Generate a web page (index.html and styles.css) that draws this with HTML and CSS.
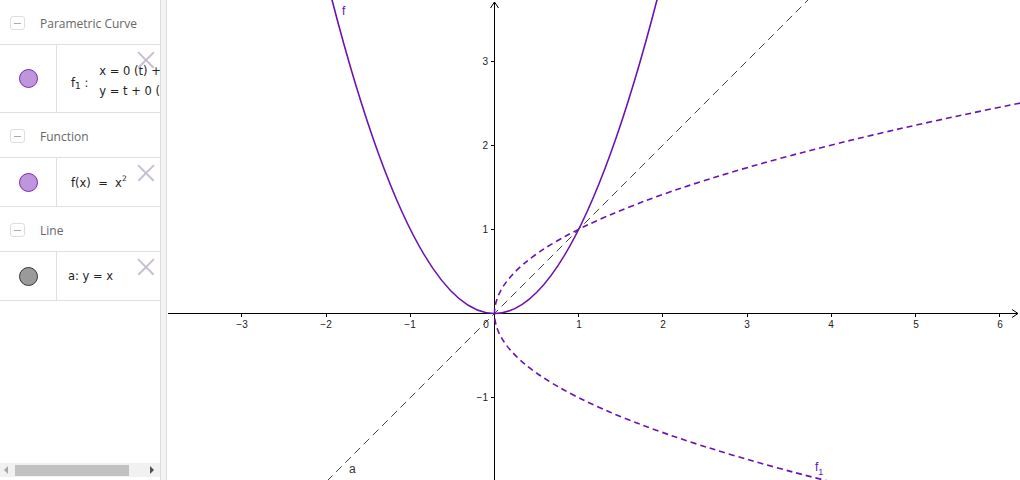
FILE: index.html
```html
<!DOCTYPE html>
<html>
<head>
<meta charset="utf-8">
<link rel="stylesheet" href="styles.css">
</head>
<body>
<div class="app">
  <aside class="algebra">
    <div class="group">
      <div class="header"><span class="toggle"></span><span class="htitle">Parametric Curve</span></div>
      <div class="item item-tall">
        <div class="marble-cell"><span class="marble purple"></span></div>
        <div class="expr">
          <span class="fname">f<sub>1</sub> :</span>
          <span class="cases"><span>x = 0 (t) +</span><span>y = t + 0 (</span></span>
        </div>
        <span class="close"></span>
      </div>
    </div>
    <div class="group">
      <div class="header"><span class="toggle"></span><span class="htitle">Function</span></div>
      <div class="item">
        <div class="marble-cell"><span class="marble purple"></span></div>
        <div class="expr"><span>f(x)&nbsp; = &nbsp;x<sup>2</sup></span></div>
        <span class="close"></span>
      </div>
    </div>
    <div class="group">
      <div class="header"><span class="toggle"></span><span class="htitle">Line</span></div>
      <div class="item">
        <div class="marble-cell"><span class="marble gray"></span></div>
        <div class="expr expr-line"><span>a: y = x</span></div>
        <span class="close"></span>
      </div>
    </div>
    <div class="hscroll">
      <span class="arrow-left"></span>
      <span class="thumb"></span>
      <span class="arrow-right"></span>
    </div>
  </aside>
  <div class="splitter"></div>
  <main class="graphics">
    <svg class="plot" viewBox="167 0 853 480" width="853" height="480" xmlns="http://www.w3.org/2000/svg">
      <g class="axes" stroke="#000" stroke-width="1" fill="none">
        <line x1="168" y1="313.5" x2="1018" y2="313.5"/>
        <polyline points="1012,309.5 1018,313.5 1012,317.5"/>
        <line x1="494.5" y1="480" x2="494.5" y2="2"/>
        <polyline points="490.5,8 494.5,2 498.5,8"/>
        <line x1="241.5" y1="313.5" x2="241.5" y2="317"/>
        <line x1="326.5" y1="313.5" x2="326.5" y2="317"/>
        <line x1="410.5" y1="313.5" x2="410.5" y2="317"/>
        <line x1="578.5" y1="313.5" x2="578.5" y2="317"/>
        <line x1="662.5" y1="313.5" x2="662.5" y2="317"/>
        <line x1="747.5" y1="313.5" x2="747.5" y2="317"/>
        <line x1="831.5" y1="313.5" x2="831.5" y2="317"/>
        <line x1="915.5" y1="313.5" x2="915.5" y2="317"/>
        <line x1="999.5" y1="313.5" x2="999.5" y2="317"/>
        <line x1="491" y1="61.5" x2="494.5" y2="61.5"/>
        <line x1="491" y1="145.5" x2="494.5" y2="145.5"/>
        <line x1="491" y1="229.5" x2="494.5" y2="229.5"/>
        <line x1="491" y1="397.5" x2="494.5" y2="397.5"/>
      </g>
      <g class="ticklabels" font-family="Liberation Sans, Arial, sans-serif" font-size="10" fill="#222" text-anchor="middle">
        <text x="242" y="328">−3</text>
        <text x="326" y="328">−2</text>
        <text x="410" y="328">−1</text>
        <text x="579" y="328">1</text>
        <text x="663" y="328">2</text>
        <text x="747" y="328">3</text>
        <text x="831" y="328">4</text>
        <text x="916" y="328">5</text>
        <text x="1000" y="328">6</text>
        <text x="486" y="328">0</text>
      </g>
      <g font-family="Liberation Sans, Arial, sans-serif" font-size="10" fill="#222" text-anchor="end">
        <text x="488" y="65">3</text>
        <text x="488" y="149">2</text>
        <text x="488" y="233">1</text>
        <text x="488" y="401">−1</text>
      </g>
      <line x1="317.7" y1="490.3" x2="822.9" y2="-14.9" stroke="#444" stroke-width="1" stroke-dasharray="8,5" fill="none"/>
      <path d="M 831.3 481.9 Q 56.66 288.24 1063.7 94.58" fill="none" stroke="#6a12b0" stroke-width="1.6" stroke-dasharray="6,4"/>
      <path d="M 330.31 -6.67 Q 494.5 633.67 658.69 -6.67" fill="none" stroke="#6a12b0" stroke-width="1.6"/>
      <text x="342" y="15" font-family="Liberation Sans, Arial, sans-serif" font-size="12" fill="#6a12b0">f</text>
      <text x="349" y="473" font-family="Liberation Sans, Arial, sans-serif" font-size="12" fill="#333">a</text>
      <text x="815" y="471" font-family="Liberation Sans, Arial, sans-serif" font-size="12" fill="#6a12b0">f<tspan font-size="9" dy="4">1</tspan></text>
    </svg>
  </main>
</div>
</body>
</html>
```
FILE: styles.css
```css
html, body {
  margin: 0;
  padding: 0;
  background: #fff;
}
.app {
  display: flex;
  width: 1020px;
  height: 480px;
  overflow: hidden;
}
.algebra {
  width: 160px;
  flex: none;
  display: flex;
  flex-direction: column;
  overflow: hidden;
  background: #fff;
  font-family: "Open Sans", "DejaVu Sans", sans-serif;
}
.splitter {
  width: 5px;
  flex: none;
  background: #f3f3f3;
  border-left: 1px solid #dcdcdc;
  border-right: 1px solid #dcdcdc;
}
.graphics {
  flex: 1;
  position: relative;
  overflow: hidden;
}
.plot {
  display: block;
}
.header {
  display: flex;
  align-items: center;
  padding-top: 2px;
  border-bottom: 1px solid #e0e0e0;
  box-sizing: border-box;
  height: 45px;
}
.toggle {
  width: 13px;
  height: 12px;
  margin-left: 10px;
  margin-right: 15px;
  border: 1px solid #dedede;
  border-radius: 3px;
  position: relative;
  flex: none;
}
.toggle::after {
  content: "";
  position: absolute;
  left: 3px;
  right: 3px;
  top: 5.5px;
  height: 1px;
  background: #aaa;
}
.htitle {
  font-size: 12px;
  color: #666;
  white-space: nowrap;
}
.item {
  display: flex;
  height: 48px;
  border-bottom: 1px solid #e0e0e0;
  position: relative;
}
.item-tall {
  height: 67px;
}
.marble-cell {
  width: 56px;
  flex: none;
  border-right: 1px solid #e0e0e0;
  display: flex;
  align-items: center;
  justify-content: center;
}
.marble {
  width: 19px;
  height: 19px;
  border-radius: 50%;
  box-sizing: border-box;
}
.marble.purple {
  background: #bf95dc;
  border: 1px solid #7a27b8;
}
.marble.gray {
  background: #9a9a9a;
  border: 1px solid #333;
}
.expr {
  display: flex;
  align-items: center;
  padding-left: 14px;
  font-family: "DejaVu Sans", sans-serif;
  font-size: 11.5px;
  color: #222;
  white-space: nowrap;
}
.expr-line {
  padding-left: 11px;
}
.expr sup {
  font-size: 7.5px;
  vertical-align: 6px;
}
.item-tall .expr {
  padding-top: 5px;
}
.fname {
  margin-right: 11px;
  margin-top: 4px;
}
.fname sub {
  font-size: 9px;
  vertical-align: -2px;
}
.cases {
  display: flex;
  flex-direction: column;
  gap: 6px;
}
.close {
  position: absolute;
  top: 6px;
  right: 6px;
  width: 16px;
  height: 16px;
}
.close::before,
.close::after {
  content: "";
  position: absolute;
  left: -3px;
  top: 7.5px;
  width: 22px;
  height: 1.5px;
  background: #c8bed2;
  transform: rotate(45deg);
}
.close::after {
  transform: rotate(-45deg);
}
.hscroll {
  margin-top: auto;
  margin-bottom: 3px;
  height: 14px;
  background: #f1f1f1;
  display: flex;
  align-items: center;
  position: relative;
}
.arrow-left {
  width: 0;
  height: 0;
  margin-left: 4px;
  border-top: 4px solid transparent;
  border-bottom: 4px solid transparent;
  border-right: 4px solid #a8a8a8;
}
.thumb {
  margin-left: 7px;
  width: 114px;
  height: 11px;
  background: #c1c1c1;
}
.arrow-right {
  width: 0;
  height: 0;
  margin-left: 21px;
  border-top: 4px solid transparent;
  border-bottom: 4px solid transparent;
  border-left: 4px solid #505050;
}
```
